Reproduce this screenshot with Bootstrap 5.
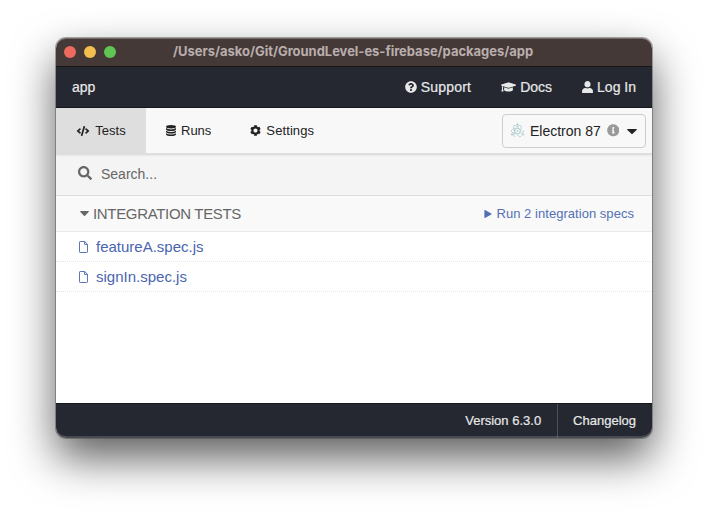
<!DOCTYPE html>
<html lang="en">
<head>
<meta charset="utf-8">
<title>app</title>
<link href="https://cdn.jsdelivr.net/npm/bootstrap@5.3.0/dist/css/bootstrap.min.css" rel="stylesheet">
<style>
body{background:#fff;font-family:"Liberation Sans",Arial,sans-serif;font-size:14px;line-height:20px;height:512px;overflow:hidden;padding:38px 56px 0;color:#222}
a{text-decoration:none;color:inherit}
svg{display:block;flex:none;fill:currentColor}
.win{width:596px;height:400px;border-radius:10px;overflow:hidden;box-shadow:0 0 0 1px rgba(70,70,70,.45),0 20px 44px rgba(0,0,0,.64);position:relative}
.win::after{content:"";position:absolute;inset:0;border-radius:10px;box-shadow:inset 0 1px 0 rgba(255,255,255,.25),inset 0 -2px 0 rgba(255,255,255,.16);pointer-events:none}
.titlebar{height:29px;background:#443937;border-bottom:1px solid #191716;padding:0 8px}
.lights{gap:8px;width:109px}
.light{width:12px;height:12px;border-radius:50%}
.light-red{background:#ee6a5f}.light-yellow{background:#f5bf4f}.light-green{background:#61c554}
.title{font:700 13px/26px Inter,sans-serif;color:#b9aead;letter-spacing:-.03px;white-space:nowrap;height:28px}
.topbar{height:41px;background:#252831;color:#e8e8e8;padding:0 16px;border-bottom:1px solid #16181f;-webkit-text-stroke:.2px}
.topbar .links{gap:30px}
.topbar .links a{gap:4px}
.support-label{letter-spacing:.2px}
.tabs{height:46px;background:#f8f8f8;border-bottom:1px solid #ddd;font-size:13px;box-shadow:0 1px 2px rgba(0,0,0,.12);position:relative}
.tab-item{color:#222;height:45px;gap:5px}
.tab-item.active{background:#dedede;width:90px}
.tab-runs{margin-left:20px}
.tab-settings{margin-left:39px;letter-spacing:.1px}
.browser{width:144px;height:34px;border:1px solid #ccc;border-radius:4px;margin-right:6px;padding:0 0 0 7px;color:#222;font-size:14px}
.electron{margin-right:5px}
.info{margin-left:6px;color:#999}
.browser-caret{margin:2px 0 0 8px}
.search{height:42px;background:#f4f4f4;border-bottom:1px solid #dcdcdc;color:#666;padding:0 22px 2px;gap:9px}
.search svg{margin-top:-2px}
.group{height:36px;background:#f9f9f9;border-bottom:1px solid #eaeaea;color:#666;padding:0 18px 0 24px}
.group-title{font-size:15px;letter-spacing:-.33px;margin-left:4px}
.link{color:#5470b5;font-size:13px;gap:4px;letter-spacing:.04px}
.spec{height:30px;border-bottom:1px dotted #e6e6e6;padding:0 23px;font-size:15px;color:#4a65b0;gap:8px}
.spec svg{width:9px;height:12px;fill:none;stroke:currentColor;stroke-width:.9}
.files{background:#fff}
.foot{height:35px;background:#252831;color:#e8e8e8;font-size:13px;border-top:1px solid #16181f;-webkit-text-stroke:.2px}
.foot span{margin-right:16px}
.foot a{border-left:1px solid #4b4e5b;padding:0 16px 0 15px}
</style>
</head>
<body>
<div class="win d-flex flex-column">
  <div class="titlebar d-flex align-items-center">
    <div class="lights d-flex"><span class="light light-red"></span><span class="light light-yellow"></span><span class="light light-green"></span></div>
    <div class="title">/Users/asko/Git/GroundLevel-es-firebase/packages/app</div>
  </div>
  <nav class="topbar d-flex align-items-center">
    <span class="me-auto">app</span>
    <div class="links d-flex">
    <a href="#" class="d-flex align-items-center"><svg width="12" height="12" viewBox="0 0 512 512"><path d="M504 256c0 136.997-111.043 248-248 248S8 392.997 8 256C8 119.083 119.043 8 256 8s248 111.083 248 248zM262.655 90c-54.497 0-89.255 22.957-116.549 63.758-3.536 5.286-2.353 12.415 2.715 16.258l34.699 26.31c5.205 3.947 12.621 3.008 16.665-2.122 17.864-22.658 30.113-35.797 57.303-35.797 20.429 0 45.698 13.148 45.698 32.958 0 14.976-12.363 22.667-32.534 33.976C247.128 238.528 216 254.941 216 296v4c0 6.627 5.373 12 12 12h56c6.627 0 12-5.373 12-12v-1.333c0-28.462 83.186-29.647 83.186-106.667 0-58.002-60.165-102-116.531-102zM256 338c-25.365 0-46 20.635-46 46 0 25.364 20.635 46 46 46s46-20.636 46-46c0-25.365-20.635-46-46-46z"/></svg><span class="support-label">Support</span></a>
    <a href="#" class="d-flex align-items-center"><svg width="15" height="12" viewBox="0 0 640 512"><path d="M622.34 153.2L343.4 67.5c-15.2-4.67-31.6-4.67-46.79 0L17.66 153.2c-23.54 7.23-23.54 38.36 0 45.59l48.63 14.94c-10.67 13.19-17.23 29.28-17.88 46.9C38.78 266.15 32 276.11 32 288c0 10.78 5.68 19.85 13.86 25.65L20.33 428.53C18.11 438.52 25.71 448 35.94 448h56.11c10.24 0 17.84-9.48 15.62-19.47L82.14 313.65C90.32 307.85 96 298.78 96 288c0-11.57-6.47-21.25-15.66-26.87.76-15.02 8.44-28.3 20.69-36.72L296.6 284.5c9.06 2.78 26.44 6.25 46.79 0l278.95-85.7c23.55-7.24 23.55-38.36 0-45.6zM352.79 315.09c-28.53 8.76-52.84 3.92-65.59 0l-145.02-44.55L128 384c0 35.35 85.96 64 192 64s192-28.65 192-64l-14.18-113.47-145.03 44.56z"/></svg>Docs</a>
    <a href="#" class="d-flex align-items-center"><svg width="11" height="12.5" viewBox="0 0 448 512"><path d="M224 256c70.7 0 128-57.3 128-128S294.7 0 224 0 96 57.3 96 128s57.3 128 128 128zm89.6 32h-16.7c-22.2 10.2-46.9 16-72.9 16s-50.6-5.8-72.9-16h-16.7C60.2 288 0 348.2 0 422.4V464c0 26.5 21.5 48 48 48h352c26.5 0 48-21.5 48-48v-41.6c0-74.2-60.2-134.4-134.4-134.4z"/></svg>Log In</a>
    </div>
  </nav>
  <div class="tabs d-flex align-items-center">
    <a href="#" class="tab-item active d-flex align-items-center justify-content-center"><svg width="14" height="10" viewBox="0 0 640 512"><path d="M278.9 511.5l-61-17.7c-6.4-1.8-10-8.5-8.2-14.9L346.2 8.7c1.8-6.4 8.5-10 14.9-8.2l61 17.7c6.4 1.8 10 8.5 8.2 14.9L293.8 503.3c-1.9 6.4-8.5 10.1-14.9 8.2zm-114-112.2l43.5-46.4c4.6-4.9 4.3-12.7-.8-17.2L117 256l90.6-79.7c5.1-4.5 5.5-12.3.8-17.2l-43.5-46.4c-4.5-4.8-12.1-5.1-17-.5L3.8 247.2c-5.1 4.7-5.1 12.8 0 17.5l144.1 135.1c4.9 4.6 12.5 4.4 17-.5zm327.2.6l144.1-135.1c5.1-4.7 5.1-12.8 0-17.5L492.1 112.1c-4.8-4.5-12.4-4.3-17 .5L431.6 159c-4.6 4.9-4.3 12.7.8 17.2L523 256l-90.6 79.7c-5.1 4.5-5.5 12.3-.8 17.2l43.5 46.4c4.5 4.9 12.1 5.1 17 .6z"/></svg>Tests</a>
    <a href="#" class="tab-item tab-runs d-flex align-items-center"><svg width="10" height="11" viewBox="0 0 10 11"><ellipse cx="5" cy="1.7" rx="5" ry="1.7"/><path d="M0 3.1Q1.6 4.4 5 4.4T10 3.1V4.5Q9 6.1 5 6.1T0 4.5zM0 5.7Q1.6 7 5 7T10 5.7V7Q9 8.6 5 8.6T0 7zM0 8.2Q1.6 9.5 5 9.5T10 8.2V9.4Q9 11 5 11T0 9.4z"/></svg>Runs</a>
    <a href="#" class="tab-item tab-settings d-flex align-items-center me-auto"><svg width="11" height="11" viewBox="0 0 512 512"><path d="M487.4 315.7l-42.6-24.6c4.3-23.2 4.3-47 0-70.2l42.6-24.6c4.9-2.8 7.1-8.6 5.5-14-11.1-35.6-30-67.8-54.7-94.6-3.8-4.1-10-5.1-14.8-2.3L380.8 110c-17.9-15.4-38.5-27.3-60.8-35.1V25.8c0-5.6-3.9-10.5-9.4-11.7-36.7-8.2-74.3-7.8-109.2 0-5.5 1.2-9.4 6.1-9.4 11.7V75c-22.2 7.9-42.8 19.8-60.8 35.1L88.7 85.5c-4.9-2.8-11-1.9-14.8 2.3-24.7 26.7-43.6 58.9-54.7 94.6-1.7 5.4.6 11.2 5.5 14L67.3 221c-4.3 23.2-4.3 47 0 70.2l-42.6 24.6c-4.9 2.8-7.1 8.6-5.5 14 11.1 35.6 30 67.8 54.7 94.6 3.8 4.1 10 5.1 14.8 2.3l42.6-24.6c17.9 15.4 38.5 27.3 60.8 35.1v49.2c0 5.6 3.9 10.5 9.4 11.7 36.7 8.2 74.3 7.8 109.2 0 5.5-1.2 9.4-6.1 9.4-11.7v-49.2c22.2-7.9 42.8-19.8 60.8-35.1l42.6 24.6c4.9 2.8 11 1.9 14.8-2.3 24.7-26.7 43.6-58.9 54.7-94.6 1.5-5.5-.7-11.3-5.6-14.1zM256 352c-53 0-96-43-96-96s43-96 96-96 96 43 96 96-43 96-96 96z"/></svg>Settings</a>
    <div class="browser d-flex align-items-center text-nowrap">
      <svg class="electron" width="15" height="16" viewBox="0 0 30 32" stroke="#a0c4ca" stroke-width="1.3"><g fill="none"><ellipse cx="15" cy="16" rx="12.5" ry="5" stroke-dasharray="46 8"/><ellipse cx="15" cy="16" rx="12.5" ry="5" transform="rotate(60 15 16)" stroke-dasharray="46 8"/><ellipse cx="15" cy="16" rx="12.5" ry="5" transform="rotate(120 15 16)" stroke-dasharray="46 8"/></g><g fill="#a0c4ca"><circle cx="15" cy="16" r="1"/><circle cx="4" cy="23" r="1.4"/><circle cx="26" cy="23" r="1.4"/><circle cx="15" cy="3" r="1.4"/></g></svg>
      <span>Electron 87</span>
      <svg class="info" width="12.5" height="12.5" viewBox="0 0 512 512"><path d="M256 8C119.043 8 8 119.083 8 256c0 136.997 111.043 248 248 248s248-111.003 248-248C504 119.083 392.957 8 256 8zm0 110c23.196 0 42 18.804 42 42s-18.804 42-42 42-42-18.804-42-42 18.804-42 42-42zm56 254c0 6.627-5.373 12-12 12h-88c-6.627 0-12-5.373-12-12v-24c0-6.627 5.373-12 12-12h12v-64h-12c-6.627 0-12-5.373-12-12v-24c0-6.627 5.373-12 12-12h64c6.627 0 12 5.373 12 12v100h12c6.627 0 12 5.373 12 12v24z"/></svg>
      <svg class="browser-caret" width="10" height="5" viewBox="0 0 10 5"><path d="M.6 0h8.8q.8.2.2.9L5.6 4.7q-.6.5-1.2 0L.4.9Q-.2.2.6 0z"/></svg>
    </div>
  </div>
  <div class="search d-flex align-items-center"><svg width="14" height="14" viewBox="0 0 512 512"><path d="M505 442.7L405.3 343c-4.5-4.5-10.6-7-17-7H372c27.6-35.3 44-79.7 44-128C416 93.1 322.9 0 208 0S0 93.1 0 208s93.1 208 208 208c48.3 0 92.7-16.4 128-44v16.3c0 6.4 2.5 12.5 7 17l99.7 99.7c9.4 9.4 24.6 9.4 33.9 0l28.3-28.3c9.4-9.4 9.4-24.6.1-34zM208 336c-70.7 0-128-57.2-128-128 0-70.7 57.2-128 128-128 70.7 0 128 57.2 128 128 0 70.7-57.2 128-128 128z"/></svg><span>Search...</span></div>
  <div class="group d-flex align-items-center">
    <svg width="9" height="5" viewBox="0 0 10 5" preserveAspectRatio="none"><path d="M.6 0h8.8q.8.2.2.9L5.6 4.7q-.6.5-1.2 0L.4.9Q-.2.2.6 0z"/></svg>
    <span class="group-title me-auto">INTEGRATION TESTS</span>
    <a href="#" class="link d-flex align-items-center"><svg width="8" height="8" viewBox="0 0 8 8"><path d="M.4 0.4Q.5-.1 1 .1L7.3 3.6q.5.4 0 .8L1 7.9Q.5 8.1.4 7.6z"/></svg>Run 2 integration specs</a>
  </div>
  <div class="files flex-grow-1">
    <a href="#" class="spec d-flex align-items-center"><svg viewBox="0 0 9 12"><path d="M1.2.5H5.7L8.5 3.3V10.8q0 .7-.7.7H1.2q-.7 0-.7-.7V1.2Q.5.5 1.2.5zM5.6.6V3.4H8.4"/></svg>featureA.spec.js</a>
    <a href="#" class="spec d-flex align-items-center"><svg viewBox="0 0 9 12"><path d="M1.2.5H5.7L8.5 3.3V10.8q0 .7-.7.7H1.2q-.7 0-.7-.7V1.2Q.5.5 1.2.5zM5.6.6V3.4H8.4"/></svg>signIn.spec.js</a>
  </div>
  <footer class="foot d-flex justify-content-end align-items-stretch">
    <span class="d-flex align-items-center">Version 6.3.0</span>
    <a href="#" class="d-flex align-items-center">Changelog</a>
  </footer>
</div>
<script src="https://cdn.jsdelivr.net/npm/bootstrap@5.3.0/dist/js/bootstrap.bundle.min.js"></script>
</body>
</html>
